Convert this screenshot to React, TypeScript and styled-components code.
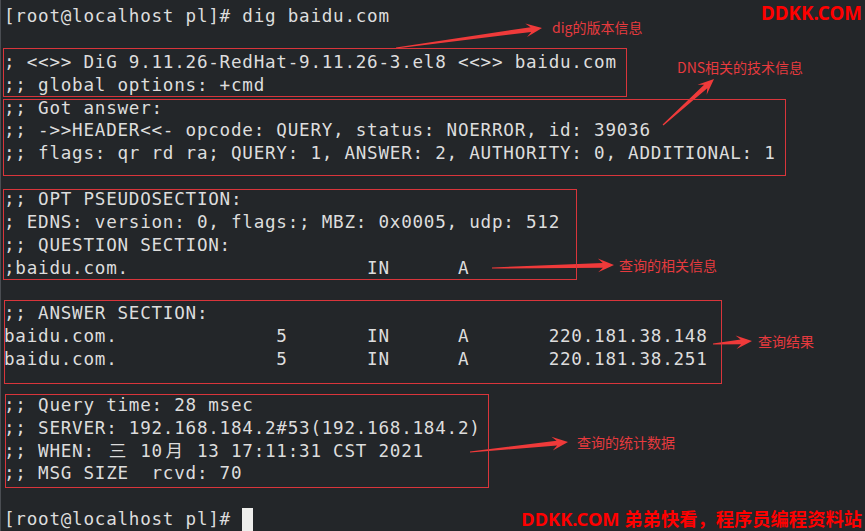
import React from "react";
import styled, { createGlobalStyle } from "styled-components";

const CELL = 11.35;
const ROW = 22.86;
const PAD_TOP = 5.2;
const PAD_LEFT = 4;
const MARK = "#d9353b";

const GlobalStyle = createGlobalStyle`
  html, body {
    margin: 0;
    padding: 0;
    background: #232629;
  }
`;

const Screen = styled.div`
  position: relative;
  box-sizing: border-box;
  width: 865px;
  height: 531px;
  overflow: hidden;
  padding: ${PAD_TOP}px 0 0 ${PAD_LEFT}px;
  background: #232629;
  box-shadow: inset 1px 0 0 #4a4d52;
  color: #dddddd;
  font-family: "DejaVu Sans Mono", "Noto Sans CJK SC", monospace;
  font-size: 17.6px;
  letter-spacing: 0.755px;
  line-height: ${ROW}px;
`;

const Line = styled.div`
  height: ${ROW}px;
  white-space: pre;
`;

const PromptLine = styled(Line)`
  display: flex;
  align-items: center;
  justify-content: space-between;
  padding-right: 3px;
`;

const Prompt = styled.span`
  white-space: pre;
`;

const Wide = styled.span`
  display: inline-block;
  width: ${CELL * 2}px;
  text-align: center;
  letter-spacing: 0;
`;

const Cursor = styled.span`
  display: inline-block;
  width: ${CELL - 0.6}px;
  height: ${ROW}px;
  vertical-align: top;
  background: #eeeeec;
`;

const Watermark = styled.span<{ $lift?: number; $size?: number }>`
  position: relative;
  top: ${(p) => -(p.$lift ?? 0)}px;
  font-family: "Noto Sans", "Noto Sans CJK SC", sans-serif;
  font-weight: 700;
  font-size: ${(p) => p.$size ?? 18.5}px;
  line-height: 1;
  letter-spacing: 0;
  color: #ff0000;
`;

const Section = styled.div`
  position: relative;
`;

const Frame = styled.div<{ $left: number; $top: number; $ext: number; $width: number }>`
  position: absolute;
  z-index: 1;
  left: ${(p) => Math.round(p.$left)}px;
  top: ${(p) => p.$top.toFixed(2)}px;
  bottom: ${(p) => (-p.$ext).toFixed(2)}px;
  width: ${(p) => Math.round(p.$width)}px;
  color: ${MARK};
  box-shadow: inset 0 0 0 1px ${MARK};
  pointer-events: none;
`;

const Overlay = styled.svg`
  position: absolute;
  left: 0;
  top: 0;
  width: 865px;
  height: 531px;
  pointer-events: none;
`;

const Note = styled.span<{ $x: number; $y: number }>`
  position: absolute;
  left: ${(p) => p.$x}px;
  top: ${(p) => p.$y - 8}px;
  font-family: "Noto Sans CJK SC", "Noto Sans", sans-serif;
  font-size: 14px;
  line-height: 14px;
  letter-spacing: 0;
  white-space: nowrap;
  color: #e63a3e;
`;

type Pt = [number, number];

const arrowPoints = (from: Pt, to: Pt) => {
  const [x1, y1] = from;
  const [x2, y2] = to;
  const dx = x2 - x1;
  const dy = y2 - y1;
  const len = Math.hypot(dx, dy);
  const ux = dx / len;
  const uy = dy / len;
  const nx = -uy;
  const ny = ux;
  const head = Math.min(16, len * 0.45);
  const at = (d: number, w: number): string =>
    `${(x1 + ux * d + nx * w).toFixed(2)},${(y1 + uy * d + ny * w).toFixed(2)}`;
  return [
    at(0, 0.6),
    at(len - head * 0.7, 2.4),
    at(len - head, 6.8),
    at(len, 0),
    at(len - head, -6.8),
    at(len - head * 0.7, -2.4),
    at(0, -0.6),
  ].join(" ");
};

const notes: { text: string; x: number; y: number; from: Pt; to: Pt }[] = [
  { text: "dig的版本信息", x: 552, y: 28, from: [396, 48], to: [542, 28] },
  { text: "DNS相关的技术信息", x: 677, y: 68, from: [663, 125], to: [714, 79] },
  { text: "查询的相关信息", x: 619, y: 266, from: [492, 268], to: [614, 265] },
  { text: "查询结果", x: 758, y: 342, from: [713, 344], to: [752, 341] },
  { text: "查询的统计数据", x: 577, y: 443, from: [470, 452], to: [568, 442] },
];

// fields placed at tab stops (absolute column of the next field)
const cols = (...parts: [string, number][]) =>
  parts.reduce((acc, [s, stop]) => (stop ? (acc + s).padEnd(stop) : acc + s), "");

const Text: React.FC<{ children: string }> = ({ children }) => (
  <>
    {children.split(/([\u2e80-\u9fff])/).map((part, i) =>
      i % 2 ? <Wide key={i}>{part}</Wide> : part
    )}
  </>
);

// frame = red marker rectangle in page pixels: [left, top, right, bottom]
const sections: {
  start: number;
  frame: [number, number, number, number];
  rows: string[];
}[] = [
  {
    start: 2,
    frame: [3, 48, 627, 97],
    rows: [
      "; <<>> DiG 9.11.26-RedHat-9.11.26-3.el8 <<>> baidu.com",
      ";; global options: +cmd",
    ],
  },
  {
    start: 4,
    frame: [3, 99, 786, 176],
    rows: [
      ";; Got answer:",
      ";; ->>HEADER<<- opcode: QUERY, status: NOERROR, id: 39036",
      ";; flags: qr rd ra; QUERY: 1, ANSWER: 2, AUTHORITY: 0, ADDITIONAL: 1",
    ],
  },
  {
    start: 8,
    frame: [3, 189, 577, 280],
    rows: [
      ";; OPT PSEUDOSECTION:",
      "; EDNS: version: 0, flags:; MBZ: 0x0005, udp: 512",
      ";; QUESTION SECTION:",
      cols([";baidu.com.", 32], ["IN", 40], ["A", 0]),
    ],
  },
  {
    start: 13,
    frame: [4, 300, 722, 384],
    rows: [
      ";; ANSWER SECTION:",
      cols(["baidu.com.", 24], ["5", 32], ["IN", 40], ["A", 48], ["220.181.38.148", 0]),
      cols(["baidu.com.", 24], ["5", 32], ["IN", 40], ["A", 48], ["220.181.38.251", 0]),
    ],
  },
  {
    start: 17,
    frame: [5, 394, 489, 488],
    rows: [
      ";; Query time: 28 msec",
      ";; SERVER: 192.168.184.2#53(192.168.184.2)",
      ";; WHEN: 三 10月 13 17:11:31 CST 2021",
      ";; MSG SIZE  rcvd: 70",
    ],
  },
];

export default function App() {
  let row = 1;
  return (
    <>
      <GlobalStyle />
      <Screen>
        <PromptLine>
          <Prompt>[root@localhost pl]# dig baidu.com</Prompt>
          <Watermark $lift={3} $size={18.8}>
            DDKK.COM
          </Watermark>
        </PromptLine>
        {sections.map((sec, i) => {
          const gap = sec.start > row;
          row = sec.start + sec.rows.length;
          const [l, t, r, b] = sec.frame;
          const top = PAD_TOP + ROW * sec.start;
          const bottom = top + ROW * sec.rows.length;
          return (
            <React.Fragment key={i}>
              {gap && <Line />}
              <Section>
                {sec.rows.map((text, j) => (
                  <Line key={j}>
                    <Text>{text}</Text>
                  </Line>
                ))}
                <Frame
                  $left={l - PAD_LEFT}
                  $top={t - top}
                  $ext={b - bottom}
                  $width={r - l}
                />
              </Section>
            </React.Fragment>
          );
        })}
        <Line />
        <PromptLine>
          <Prompt>
            [root@localhost pl]# <Cursor />
          </Prompt>
          <Watermark $size={18.3}>DDKK.COM 弟弟快看，程序员编程资料站</Watermark>
        </PromptLine>

        <Overlay viewBox="0 0 865 531">
          {notes.map((n, i) => (
            <polygon key={i} points={arrowPoints(n.from, n.to)} fill="#ef3a3a" />
          ))}
        </Overlay>
        {notes.map((n, i) => (
          <Note key={i} $x={n.x} $y={n.y}>
            {n.text}
          </Note>
        ))}
      </Screen>
    </>
  );
}
